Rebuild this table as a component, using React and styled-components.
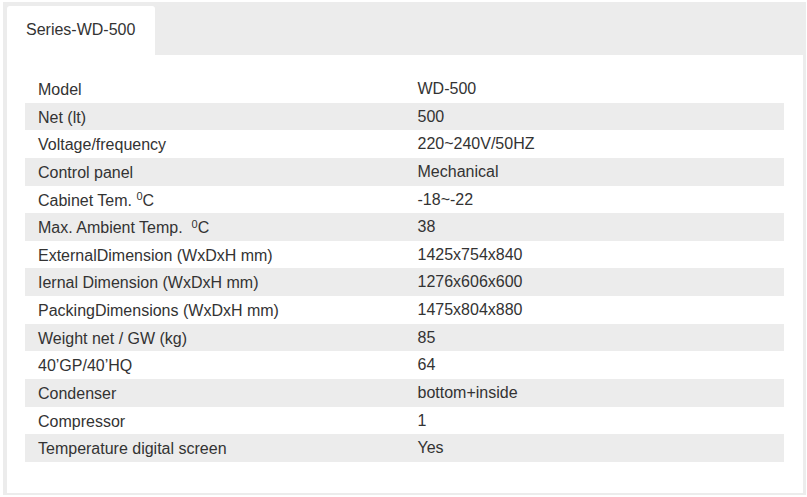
import React from "react";
import styled, { createGlobalStyle } from "styled-components";

const Global = createGlobalStyle`
  html, body { margin: 0; padding: 0; background: #ffffff; }
  body { font-family: "Liberation Sans", Arial, sans-serif; color: #333333; }
`;

const Frame = styled.div`
  margin: 2px 1px 0 3px;
  padding: 4px 3px 2px 4px;
  background: #ececec;
  width: 796px;
`;

const TabBar = styled.div`
  display: flex;
  height: 49px;
`;

const Tab = styled.div`
  width: 148px;
  box-sizing: border-box;
  padding-left: 19px;
  display: flex;
  align-items: center;
  background: #ffffff;
  border-radius: 3px 3px 0 0;
  font-size: 16px;
  color: #333333;
  padding-bottom: 1px;
`;

const Panel = styled.div`
  background: #ffffff;
  padding: 20px 19px 31px 18px;
`;

const Table = styled.table`
  width: 759px;
  border-collapse: collapse;
  table-layout: fixed;
`;

const Row = styled.tr`
  background: ${(p) => (p.$shaded ? "#ececec" : "#ffffff")};
`;

const Cell = styled.td`
  padding: ${(p) => (p.$value ? "4px 13px 4px" : "5px 13px 3px")};
  font-size: 16px;
  line-height: 19.64px;
  color: #333333;
  vertical-align: top;
  white-space: nowrap;
`;

const Sup = styled.sup`
  font-size: 11px;
  line-height: 0;
  position: relative;
  top: 1px;
`;

const rows = [
  ["Model", "WD-500"],
  ["Net (lt)", "500"],
  ["Voltage/frequency", "220~240V/50HZ"],
  ["Control panel", "Mechanical"],
  [<>Cabinet Tem. <Sup>0</Sup>C</>, "-18~-22"],
  [<>Max. Ambient Temp.&nbsp; <Sup>0</Sup>C</>, "38"],
  ["ExternalDimension (WxDxH mm)", "1425x754x840"],
  ["Iernal Dimension (WxDxH mm)", "1276x606x600"],
  ["PackingDimensions (WxDxH mm)", "1475x804x880"],
  ["Weight net / GW (kg)", "85"],
  ["40’GP/40’HQ", "64"],
  ["Condenser", "bottom+inside"],
  ["Compressor", "1"],
  ["Temperature digital screen", "Yes"],
];

export default function App() {
  return (
    <>
      <Global />
      <Frame>
        <TabBar>
          <Tab>Series-WD-500</Tab>
        </TabBar>
        <Panel>
          <Table>
            <tbody>
              {rows.map(([k, v], i) => (
                <Row key={i} $shaded={i % 2 === 1}>
                  <Cell>{k}</Cell>
                  <Cell $value>{v}</Cell>
                </Row>
              ))}
            </tbody>
          </Table>
        </Panel>
      </Frame>
    </>
  );
}
